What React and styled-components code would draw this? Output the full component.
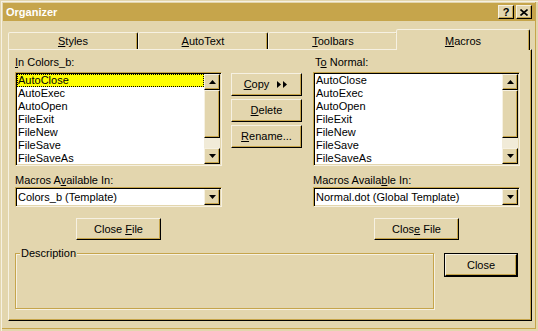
import React from "react";
import styled, { createGlobalStyle, css } from "styled-components";

const FACE = "#E3D6AE";
const LIGHT = "#F6F1E2";
const SHADOW = "#C6A54B";
const DARK = "#000000";
const TRACK = "#F1EBD8";

const GlobalStyle = createGlobalStyle`
  html, body { margin: 0; padding: 0; background: ${FACE}; }
  body {
    font-family: "Liberation Sans", Arial, sans-serif;
    font-size: 11px;
    color: #000;
  }
  * { box-sizing: border-box; }
`;

const raised = css`
  background: ${FACE};
  border: 1px solid;
  border-color: ${LIGHT} ${DARK} ${DARK} ${LIGHT};
  box-shadow: inset -1px -1px 0 ${SHADOW}, inset 1px 1px 0 ${FACE};
`;

const sunken = css`
  border: 1px solid;
  border-color: ${SHADOW} ${LIGHT} ${LIGHT} ${SHADOW};
  box-shadow: inset 1px 1px 0 ${DARK}, inset -1px -1px 0 ${FACE};
  padding: 1px;
  background: #fff;
`;

const Window = styled.div`
  width: 538px;
  height: 331px;
  padding: 3px;
  background: ${FACE};
  display: flex;
  flex-direction: column;
  box-shadow: inset 1px 1px 0 ${FACE}, inset 2px 2px 0 ${LIGHT},
    inset -2px -2px 0 ${FACE}, inset -3px -3px 0 ${SHADOW};
`;

const TitleBar = styled.div`
  height: 18px;
  background: ${SHADOW};
  display: flex;
  align-items: center;
  padding: 0 3px 0 3px;
`;

const Title = styled.div`
  flex: 1;
  color: #fff;
  font-weight: bold;
  line-height: 18px;
`;

const CaptionButtons = styled.div`
  display: flex;
  gap: 2px;
`;

const CaptionButton = styled.div`
  ${raised};
  width: 16px;
  height: 14px;
  display: flex;
  align-items: center;
  justify-content: center;
  font-weight: bold;
  font-size: 11px;
  line-height: 12px;
`;

const Body = styled.div`
  flex: 1;
  display: flex;
  flex-direction: column;
  padding: 8px 3px 7px 5px;
`;

const Tabs = styled.div`
  height: 20px;
  display: flex;
  align-items: flex-end;
  position: relative;
  z-index: 1;
`;

const Tab = styled.div`
  width: 130px;
  height: 17px;
  background: ${FACE};
  border: 1px solid;
  border-bottom: none;
  border-color: ${LIGHT} ${DARK} transparent ${LIGHT};
  box-shadow: inset -1px 0 0 ${SHADOW};
  border-radius: 2px 2px 0 0;
  text-align: center;
  line-height: 16px;
  ${(p) =>
    p.$active &&
    css`
      width: 134px;
      height: 21px;
      margin: 0 -2px -1px -2px;
      padding-top: 3px;
    `}
`;

const Panel = styled.div`
  flex: 1;
  background: ${FACE};
  border: 1px solid;
  border-color: ${LIGHT} ${DARK} ${DARK} ${LIGHT};
  box-shadow: inset -1px -1px 0 ${SHADOW};
  padding: 6px 11px 0 6px;
  display: flex;
  flex-direction: column;
`;

const Columns = styled.div`
  display: grid;
  grid-template-columns: 207px 1fr 207px;
`;

const Column = styled.div`
  display: flex;
  flex-direction: column;
`;

const Label = styled.div`
  flex-shrink: 0;
  line-height: 13px;
  height: 13px;
  margin-top: ${(p) => p.$top || 0}px;
  padding-left: ${(p) => p.$indent || 0}px;
  white-space: nowrap;
`;

const U = styled.span`
  text-decoration: underline;
  text-underline-offset: 1px;
`;

const ListBox = styled.div`
  ${sunken};
  flex-shrink: 0;
  margin-top: 3px;
  height: 94px;
  display: flex;
`;

const Items = styled.div`
  flex: 1;
  overflow: hidden;
`;

const Item = styled.div`
  height: 13px;
  line-height: 13px;
  padding-left: 1px;
  white-space: nowrap;
  ${(p) =>
    p.$selected &&
    css`
      background: #ffff00;
      outline: 1px dotted #000;
      outline-offset: -1px;
    `}
`;

const ScrollBar = styled.div`
  width: 16px;
  display: flex;
  flex-direction: column;
  background: ${TRACK};
`;

const ScrollButton = styled.div`
  ${raised};
  height: 16px;
  display: flex;
  align-items: center;
  justify-content: center;
`;

const Thumb = styled.div`
  ${raised};
  height: 48px;
`;

const Track = styled.div`
  flex: 1;
`;

const Combo = styled.div`
  ${sunken};
  flex-shrink: 0;
  height: 20px;
  display: flex;
`;

const ComboText = styled.div`
  flex: 1;
  line-height: 16px;
  padding-left: 1px;
  white-space: nowrap;
`;

const DropButton = styled.div`
  ${raised};
  width: 16px;
  display: flex;
  align-items: center;
  justify-content: center;
`;

const Button = styled.div`
  ${raised};
  flex-shrink: 0;
  width: ${(p) => p.$w}px;
  height: ${(p) => p.$h}px;
  display: flex;
  align-items: center;
  justify-content: center;
  gap: 8px;
  line-height: 13px;
  white-space: nowrap;
  ${(p) =>
    p.$default &&
    css`
      outline: 1px solid ${DARK};
    `}
`;

const Middle = styled.div`
  display: flex;
  flex-direction: column;
  gap: 3px;
  padding: 17px 0 0 9px;
`;

const CenterRow = styled.div`
  display: flex;
  justify-content: center;
  margin-top: 11px;
`;

const BottomRow = styled.div`
  display: flex;
  align-items: flex-start;
  margin-top: 13px;
`;

const Group = styled.fieldset`
  margin: -6px 0 0 0;
  width: 419px;
  height: 62px;
  padding: 0;
  border: 1px solid ${SHADOW};
  box-shadow: inset 1px 1px 0 ${LIGHT}, 1px 1px 0 ${LIGHT};
`;

const Legend = styled.legend`
  margin-left: 4px;
  padding: 0 1px;
  background: ${FACE};
  line-height: 12px;
`;

const CloseWrap = styled.div`
  margin: 1px 0 0 11px;
`;

const UpArrow = () => (
  <svg width="7" height="4" viewBox="0 0 7 4">
    <polygon points="3.5,0 7,4 0,4" fill="#000" />
  </svg>
);

const DownArrow = () => (
  <svg width="7" height="4" viewBox="0 0 7 4">
    <polygon points="0,0 7,0 3.5,4" fill="#000" />
  </svg>
);

const DoubleArrow = () => (
  <svg width="12" height="7" viewBox="0 0 12 7">
    <polygon points="0,0 4,3.5 0,7" fill="#000" />
    <polygon points="6,0 10,3.5 6,7" fill="#000" />
  </svg>
);

const CloseGlyph = () => (
  <svg width="8" height="7" viewBox="0 0 8 7">
    <path d="M0.5 0.5 L7.5 6.5 M7.5 0.5 L0.5 6.5" stroke="#000" strokeWidth="1.6" />
  </svg>
);

const macros = ["AutoClose", "AutoExec", "AutoOpen", "FileExit", "FileNew", "FileSave", "FileSaveAs"];

const MacroList = ({ selected }) => (
  <ListBox>
    <Items>
      {macros.map((m, i) => (
        <Item key={m} $selected={selected && i === 0}>{m}</Item>
      ))}
    </Items>
    <ScrollBar>
      <ScrollButton><UpArrow /></ScrollButton>
      <Thumb />
      <Track />
      <ScrollButton><DownArrow /></ScrollButton>
    </ScrollBar>
  </ListBox>
);

const Dropdown = ({ value }) => (
  <Combo>
    <ComboText>{value}</ComboText>
    <DropButton><DownArrow /></DropButton>
  </Combo>
);

export default function App() {
  return (
    <>
      <GlobalStyle />
      <Window>
        <TitleBar>
          <Title>Organizer</Title>
          <CaptionButtons>
            <CaptionButton>?</CaptionButton>
            <CaptionButton><CloseGlyph /></CaptionButton>
          </CaptionButtons>
        </TitleBar>
        <Body>
          <Tabs>
            <Tab><U>S</U>tyles</Tab>
            <Tab><U>A</U>utoText</Tab>
            <Tab><U>T</U>oolbars</Tab>
            <Tab $active><U>M</U>acros</Tab>
          </Tabs>
          <Panel>
            <Columns>
              <Column>
                <Label><U>I</U>n Colors_b:</Label>
                <MacroList selected />
                <Label $top={8}>Macros A<U>v</U>ailable In:</Label>
                <Dropdown value="Colors_b (Template)" />
                <CenterRow>
                  <Button $w={85} $h={22}><span>Close <U>F</U>ile</span></Button>
                </CenterRow>
              </Column>
              <Middle>
                <Button $w={71} $h={23}><span><U>C</U>opy</span><DoubleArrow /></Button>
                <Button $w={71} $h={23}><span><U>D</U>elete</span></Button>
                <Button $w={71} $h={23}><span><U>R</U>ename...</span></Button>
              </Middle>
              <Column>
                <Label $indent={2}>T<U>o</U> Normal:</Label>
                <MacroList />
                <Label $top={8}>Macros Availa<U>b</U>le In:</Label>
                <Dropdown value="Normal.dot (Global Template)" />
                <CenterRow>
                  <Button $w={85} $h={22}><span>Clos<U>e</U> File</span></Button>
                </CenterRow>
              </Column>
            </Columns>
            <BottomRow>
              <Group>
                <Legend>Description</Legend>
              </Group>
              <CloseWrap>
                <Button $w={72} $h={22} $default>Close</Button>
              </CloseWrap>
            </BottomRow>
          </Panel>
        </Body>
      </Window>
    </>
  );
}
